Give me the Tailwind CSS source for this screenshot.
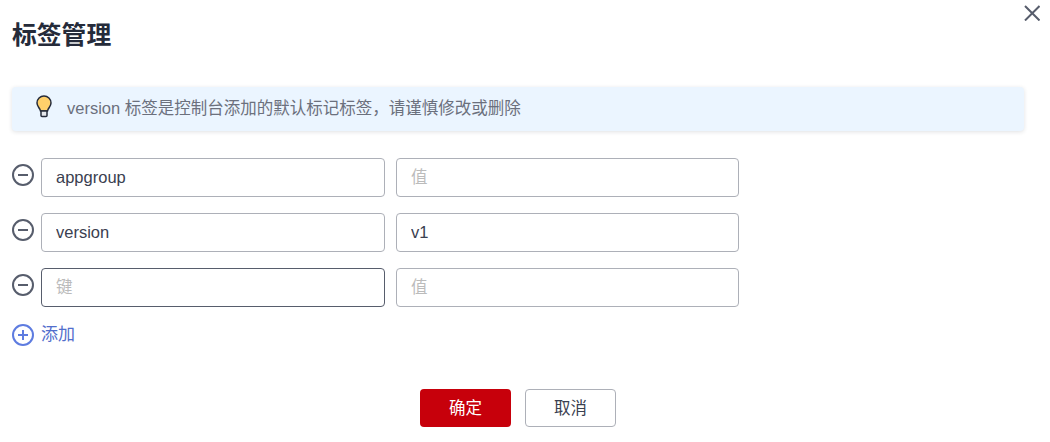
<!DOCTYPE html>
<html lang="zh-CN">
<head>
  <meta charset="UTF-8"/>
  <title>标签管理</title>
  <script src="https://cdn.jsdelivr.net/npm/@tailwindcss/browser@4"></script>
</head>
<body class="bg-white overflow-hidden font-['Liberation_Sans','Noto_Sans_CJK_SC',sans-serif]">
  <div class="relative w-[1050px] h-[442px] pl-3 pt-5">
    <button class="absolute left-[1024px] top-[5px] w-4 h-4 text-[#575d6c]">
      <svg viewBox="0 0 16 16" class="w-4 h-4" fill="none" stroke="currentColor" stroke-width="2"><path d="M1 1l14.500 14.500M15.500 1L1 15.500"/></svg>
    </button>

    <h1 class="text-[24.8px] leading-[32px] font-bold text-[#252b3a]">标签管理</h1>

    <div class="mt-[35px] w-[1012px] h-11 flex items-center pl-6 bg-[#ebf5ff] rounded-sm shadow-[0_1px_4px_rgba(37,43,58,0.14)]">
      <svg viewBox="0 0 16 24" class="w-4 h-6 -mt-1">
        <path d="M8 1a7 7 0 0 0-7 7c0 2.800 2 4.500 3 6.500l.5 1.500h7l.5-1.500c1-2 3-3.700 3-6.500A7 7 0 0 0 8 1z" fill="#ffd06b" stroke="#252b3a" stroke-width="1.500"/>
        <path d="M5 16h6v4.500a1 1 0 0 1-1 1H6a1 1 0 0 1-1-1z" fill="#e6e8ec" stroke="#252b3a" stroke-width="1.500"/>
      </svg>
      <p class="ml-[15px] -mt-px text-[16.5px] text-[#6b707d]">version 标签是控制台添加的默认标记标签，请谨慎修改或删除</p>
    </div>

    <div class="mt-[27px] flex flex-col gap-4">
      <div class="flex items-center">
        <svg viewBox="0 0 22 22" class="w-[22px] h-[22px] -mt-[5px] mr-[7px] text-[#575d6c]" fill="none" stroke="currentColor" stroke-width="2"><circle cx="11" cy="11" r="10"/><path d="M6 11h10"/></svg>
        <input value="appgroup" class="w-[344px] h-[39px] px-[14px] text-[16.5px] text-[#3a4050] bg-white border border-[#adb0b8] rounded-sm outline-none"/>
        <input placeholder="值" class="ml-[11px] w-[343px] h-[39px] px-[14px] text-[16.5px] text-[#3a4050] placeholder:text-[#bbbbbb] bg-white border border-[#adb0b8] rounded-sm outline-none"/>
      </div>
      <div class="flex items-center">
        <svg viewBox="0 0 22 22" class="w-[22px] h-[22px] -mt-[5px] mr-[7px] text-[#575d6c]" fill="none" stroke="currentColor" stroke-width="2"><circle cx="11" cy="11" r="10"/><path d="M6 11h10"/></svg>
        <input value="version" class="w-[344px] h-[39px] px-[14px] text-[16.5px] text-[#3a4050] bg-white border border-[#adb0b8] rounded-sm outline-none"/>
        <input value="v1" class="ml-[11px] w-[343px] h-[39px] px-[14px] text-[16.5px] text-[#3a4050] bg-white border border-[#adb0b8] rounded-sm outline-none"/>
      </div>
      <div class="flex items-center">
        <svg viewBox="0 0 22 22" class="w-[22px] h-[22px] -mt-[5px] mr-[7px] text-[#575d6c]" fill="none" stroke="currentColor" stroke-width="2"><circle cx="11" cy="11" r="10"/><path d="M6 11h10"/></svg>
        <input placeholder="键" class="w-[344px] h-[39px] px-[14px] text-[16.5px] text-[#3a4050] placeholder:text-[#bbbbbb] bg-white border border-[#575d6c] rounded-sm outline-none"/>
        <input placeholder="值" class="ml-[11px] w-[343px] h-[39px] px-[14px] text-[16.5px] text-[#3a4050] placeholder:text-[#bbbbbb] bg-white border border-[#adb0b8] rounded-sm outline-none"/>
      </div>
    </div>

    <div class="mt-[17px] flex items-center h-[22px] text-[#526ecc]">
      <svg viewBox="0 0 22 22" class="w-[22px] h-[22px] mr-[7px] text-[#5e7ce0]" fill="none" stroke="currentColor" stroke-width="2"><circle cx="11" cy="11" r="10"/><path d="M6 11h10M11 6v10"/></svg>
      <span class="text-[17px]">添加</span>
    </div>

    <div class="mt-[43px] flex justify-center gap-[14px] pr-[26px]">
      <button class="w-[91px] h-[38px] bg-[#c7000b] text-white text-[16.5px] rounded-sm">确定</button>
      <button class="w-[91px] h-[38px] bg-white text-[#3a4050] text-[16.5px] border border-[#adb0b8] rounded-sm">取消</button>
    </div>
  </div>
</body>
</html>
